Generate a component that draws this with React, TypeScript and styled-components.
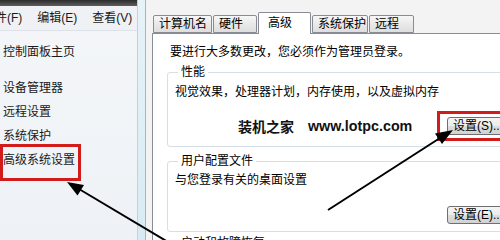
import React, { FC } from 'react';
import styled, { createGlobalStyle } from 'styled-components';

const GlobalStyle = createGlobalStyle`
  html, body {
    margin: 0;
    padding: 0;
    background: #ffffff;
  }
  body {
    font-family: 'Liberation Sans', 'Noto Sans CJK SC', sans-serif;
    font-size: 12px;
    color: #000;
  }
`;

const Screen = styled.div`
  position: relative;
  width: 500px;
  height: 240px;
  display: flex;
  overflow: hidden;
`;

// ---- left explorer pane ----
const Sidebar = styled.div`
  width: 138px;
  flex: none;
  box-sizing: border-box;
  border-right: 1px solid #c6d0da;
  display: flex;
  flex-direction: column;
  overflow: hidden;
  background: linear-gradient(180deg, #f4f6f9 0%, #eef2f6 100%);
`;

const TopStrip = styled.div`
  height: 6px;
  background: linear-gradient(180deg, #2c2c2c 0%, #5e5e5e 100%);
`;

const MenuBar = styled.div`
  height: 24px;
  display: flex;
  align-items: center;
  gap: 15px;
  padding-left: 0;
  background: #eff1f4;
  border-bottom: 1px solid #dde2e8;
  white-space: nowrap;
`;

const MenuItem = styled.span<{ $cut?: boolean }>`
  margin-left: ${(p) => (p.$cut ? '-5px' : '0')};
  font-size: 12px;
  line-height: 14px;
  color: #1a1a1a;
`;

const NavList = styled.ul`
  list-style: none;
  margin: 0;
  padding: 9px 0 0 3px;
`;

const NavItem = styled.li<{ $gapAfter?: boolean }>`
  height: 24px;
  line-height: 24px;
  font-size: 12px;
  color: #1a1a1a;
  white-space: nowrap;
  margin-bottom: ${(p) => (p.$gapAfter ? '12px' : '0')};
`;

// ---- system properties dialog ----
const DialogFrame = styled.div`
  flex: 1;
  display: flex;
  padding-left: 7px;
  background: linear-gradient(180deg, #e6f3f8 0%, #d8ebf3 100%);
`;

const Client = styled.div`
  flex: 1;
  border-left: 1px solid #a3b6c6;
  background: #f3f3f3;
  padding: 12px 0 0 6px;
  display: flex;
  flex-direction: column;
`;

const TabRow = styled.div`
  height: 21px;
  display: flex;
  align-items: flex-end;
  gap: 1px;
  padding-left: 1px;
`;

const Tab = styled.div<{ $w: number; $active?: boolean }>`
  position: relative;
  z-index: ${(p) => (p.$active ? 1 : 0)};
  box-sizing: border-box;
  width: ${(p) => p.$w}px;
  height: ${(p) => (p.$active ? 22 : 18)}px;
  margin-bottom: ${(p) => (p.$active ? -1 : 0)}px;
  padding-left: ${(p) => (p.$active ? 9 : 5)}px;
  border: 1px solid #898c95;
  border-bottom: ${(p) => (p.$active ? 'none' : '1px solid #898c95')};
  border-radius: 2px 2px 0 0;
  background: ${(p) => (p.$active ? '#ffffff' : 'linear-gradient(180deg, #f7f7f7 0%, #e9e9e9 50%, #dedede 100%)')};
  font-size: 12px;
  line-height: ${(p) => (p.$active ? 20 : 17)}px;
  white-space: nowrap;
`;

const Panel = styled.div`
  width: 400px;
  flex: 1;
  box-sizing: border-box;
  border: 1px solid #898c95;
  background: #ffffff;
  padding: 11px 0 0 14px;
`;

const Intro = styled.div`
  margin-left: 3px;
  font-size: 12px;
  line-height: 14px;
  white-space: nowrap;
`;

const Group = styled.fieldset<{ $top: number }>`
  width: 368px;
  box-sizing: border-box;
  margin: ${(p) => p.$top}px 0 0 0;
  padding: 0 10px 0 7px;
  border: 1px solid #d5dfe5;
  border-radius: 3px;
  min-width: 0;
`;

const Legend = styled.legend`
  margin-left: 3px;
  padding: 0 3px;
  font-size: 12px;
  line-height: 14px;
  white-space: nowrap;
`;

const Line = styled.div<{ $top: number }>`
  margin-top: ${(p) => p.$top}px;
  font-size: 12px;
  line-height: 14px;
  white-space: nowrap;
`;

const ActionRow = styled.div<{ $top: number; $bottom: number; $h: number }>`
  display: flex;
  align-items: center;
  height: ${(p) => p.$h}px;
  margin-top: ${(p) => p.$top}px;
  margin-bottom: ${(p) => p.$bottom}px;
`;

const Watermark = styled.div`
  display: flex;
  align-items: center;
  gap: 14px;
  padding-left: 63px;
  font-weight: bold;
  color: #111;
  white-space: nowrap;
`;

const BrandCn = styled.span`
  font-size: 14px;
  font-family: 'Noto Sans CJK SC', sans-serif;
`;

const BrandUrl = styled.span`
  font-size: 14.3px;
  font-family: 'Liberation Sans', Arial, sans-serif;
`;

const WinButton = styled.button`
  margin-left: auto;
  width: 77px;
  height: 18px;
  padding: 0 0 0 5px;
  box-sizing: border-box;
  border: 1px solid #707070;
  border-radius: 3px;
  background: linear-gradient(180deg, #f4f4f4 0%, #ececec 48%, #dddddd 52%, #d2d2d2 100%);
  font-family: 'Liberation Sans', 'Noto Sans CJK SC', sans-serif;
  font-size: 12px;
  line-height: 14px;
  color: #000;
  text-align: left;
  white-space: nowrap;
`;

// ---- annotations on top ----
const RedBox = styled.div<{ $x: number; $y: number; $w: number; $h: number }>`
  position: absolute;
  left: ${(p) => p.$x}px;
  top: ${(p) => p.$y}px;
  width: ${(p) => p.$w}px;
  height: ${(p) => p.$h}px;
  box-sizing: border-box;
  border: 3px solid #d21c1c;
  pointer-events: none;
`;

const ArrowLayer = styled.svg`
  position: absolute;
  left: 0;
  top: 0;
  pointer-events: none;
`;

const tabs = [
  { label: '计算机名', w: 59 },
  { label: '硬件', w: 44 },
  { label: '高级', w: 53, active: true },
  { label: '系统保护', w: 56 },
  { label: '远程', w: 45 },
];

const App: FC = () => {
  return (
    <>
      <GlobalStyle />
      <Screen>
        <Sidebar>
          <TopStrip />
          <MenuBar>
            <MenuItem $cut>件(F)</MenuItem>
            <MenuItem>编辑(E)</MenuItem>
            <MenuItem>查看(V)</MenuItem>
          </MenuBar>
          <NavList>
            <NavItem $gapAfter>控制面板主页</NavItem>
            <NavItem>设备管理器</NavItem>
            <NavItem>远程设置</NavItem>
            <NavItem>系统保护</NavItem>
            <NavItem>高级系统设置</NavItem>
          </NavList>
        </Sidebar>

        <DialogFrame>
          <Client>
            <TabRow>
              {tabs.map((t) => (
                <Tab key={t.label} $w={t.w} $active={t.active}>
                  {t.label}
                </Tab>
              ))}
            </TabRow>
            <Panel>
              <Intro>要进行大多数更改，您必须作为管理员登录。</Intro>

              <Group $top={6}>
                <Legend>性能</Legend>
                <Line $top={6}>视觉效果，处理器计划，内存使用，以及虚拟内存</Line>
                <ActionRow $top={16} $bottom={9} $h={22}>
                  <Watermark>
                    <BrandCn>装机之家</BrandCn>
                    <BrandUrl>www.lotpc.com</BrandUrl>
                  </Watermark>
                  <WinButton type='button'>设置(S)...</WinButton>
                </ActionRow>
              </Group>

              <Group $top={7}>
                <Legend>用户配置文件</Legend>
                <Line $top={5}>与您登录有关的桌面设置</Line>
                <ActionRow $top={19} $bottom={7} $h={18}>
                  <WinButton type='button'>设置(E)...</WinButton>
                </ActionRow>
              </Group>

              <Group $top={4}>
                <Legend>启动和故障恢复</Legend>
                <Line $top={5}>系统启动、系统失败和调试信息</Line>
              </Group>
            </Panel>
          </Client>
        </DialogFrame>

        <RedBox $x={0} $y={144} $w={81} $h={37} />
        <RedBox $x={437} $y={111} $w={70} $h={30} />

        <ArrowLayer width='500' height='240' viewBox='0 0 500 240'>
          <line x1='168' y1='242' x2='79' y2='189' stroke='#000' strokeWidth='2' />
          <polygon points='67,182 84,185 77.5,195.5' fill='#000' />
          <line x1='328' y1='210' x2='440' y2='138' stroke='#000' strokeWidth='2' />
          <polygon points='453,130 442,144 435,133.5' fill='#000' />
        </ArrowLayer>
      </Screen>
    </>
  );
};

export default App;
